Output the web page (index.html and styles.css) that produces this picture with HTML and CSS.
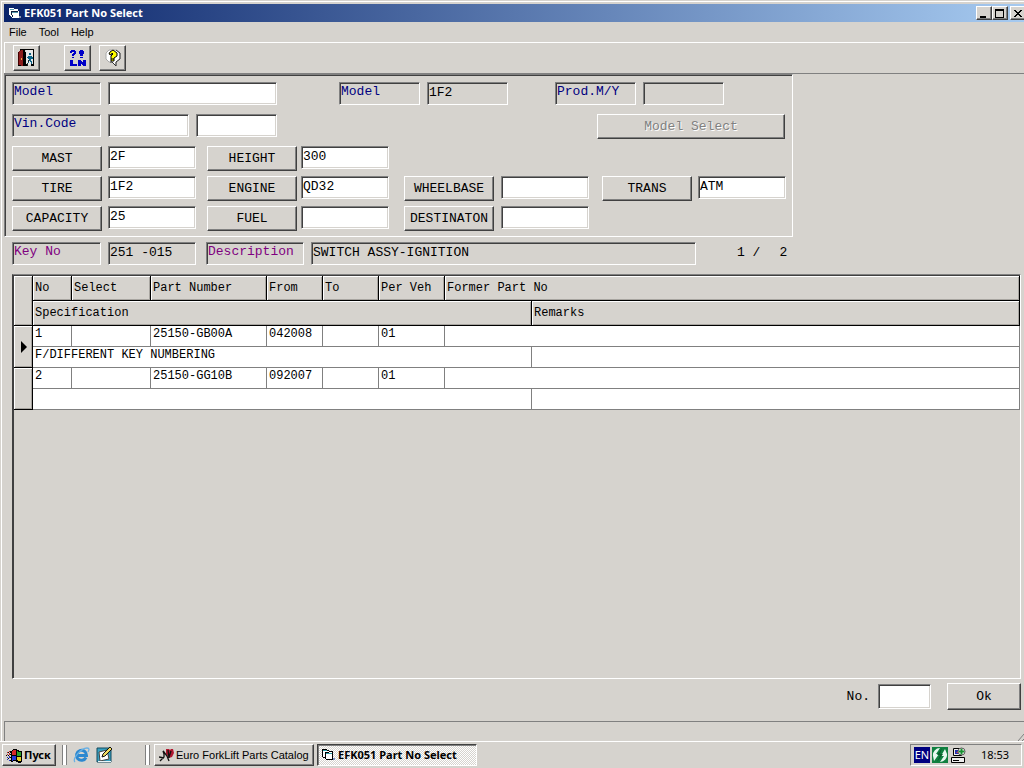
FILE: index.html
```html
<!DOCTYPE html>
<html lang="en">
<head>
    <meta charset="UTF-8">
    <meta name="viewport" content="width=device-width, initial-scale=1.0">
    <title>EFK051 Part No Select</title>
    <link rel="stylesheet" href="styles.css">
</head>
<body>
    <main class="window">
        <header class="titlebar">
            <svg class="title-icon" width="14" height="12" viewBox="0 0 14 12" shape-rendering="crispEdges">
                <path d="M1 1h5v1h4v2h1v7H4L3 9H2L1 6z" fill="#fff"/>
                <path d="M2 2h4v1H2zM4 5h6v1H4z" fill="#5a9cb0"/>
                <path d="M3 4h7v1H3zM3 5h1v3H3zM4 8h1v2H4z" fill="#102040"/>
                <path d="M11 9h2v2h-2z" fill="#8a94b0"/>
            </svg>
            <h1>EFK051 Part No Select</h1>
            <div class="window-buttons">
                <button class="win-btn" aria-label="Minimize"><svg width="10" height="9" viewBox="0 0 10 9"><path d="M1 7h6v2H1z"/></svg></button>
                <button class="win-btn" aria-label="Maximize"><svg width="10" height="9" viewBox="0 0 10 9"><path d="M0 0h9v9H0zM1 2v6h7V2z" fill-rule="evenodd"/></svg></button>
                <button class="win-btn win-close" aria-label="Close"><svg width="10" height="9" viewBox="0 0 10 9"><path d="M1 1h2v1h1v1h2V2h1V1h2v1H8v1H7v1H6v1h1v1h1v1h1v1H7V7H6V6H4v1H3v1H1V7h1V6h1V5h1V4H3V3H2V2H1z"/></svg></button>
            </div>
        </header>

        <nav class="menu">
            <button>File</button>
            <button>Tool</button>
            <button>Help</button>
        </nav>

        <div class="toolbar">
            <button class="tool" aria-label="Exit">
                <svg width="18" height="20" viewBox="0 0 18 20" shape-rendering="crispEdges">
                    <path d="M8 2h7v15H8z" fill="#e8e8e8"/>
                    <path d="M2 1h13v1H2zM15 1h1v17h-1zM13 16h2v2h-2zM0 17h5v1H0z" fill="#000"/>
                    <path d="M1 3h1V2h3v16H3v-1H1z" fill="#8b1c1c"/>
                    <path d="M0 4h1v13H0zM2 2h1v1H2z" fill="#400"/>
                    <path d="M5 2h2v2h1v12h1v2H5z" fill="#000"/>
                    <path d="M3 10h1v2H3z" fill="#e8b040"/>
                    <path d="M11 5h2v2h-2zM10 8h4v1h1v2h-2v2h1v3h-1v-2h-1v-1h-1v2h-1v1H9v-1h1v-3h1v-1h-1v-1H9V9h1z" fill="#0a6488"/>
                    <path d="M9 15h1v3H9zM10 12h1v2h-1z" fill="#222"/>
                </svg>
            </button>
            <button class="tool tool-gap" aria-label="Line number query">
                <svg width="18" height="18" viewBox="0 0 18 18" shape-rendering="crispEdges" fill="#0000c8">
                    <path d="M2 1h4v1h1v3H6v1H5v1H3V5h1V4h1V3H3v1H1V2h1zM3 8h2v1H3z"/>
                    <path d="M11 1h3v1h1v3h-1v2h-3V5h-1V2h1zM11 8h3v1h-3z"/>
                    <path d="M1 11h3v4h4v2H1zM9 11h3v1h1v1h1v-2h3v6h-3v-1h-1v-1h-1v2H9z"/>
                </svg>
            </button>
            <button class="tool" aria-label="Help">
                <svg width="18" height="18" viewBox="0 0 18 18">
                    <path d="M5 1h7l4 3v6l-4 3v4l-4-4H5L2 10V4z" fill="#fff" stroke="#aaa"/>
                    <path d="M12 1l4 3v6l-4 3v4l-4-4H6" fill="none" stroke="#333"/>
                    <path d="M6 3l3-2 4 3v3l-3 2v3H7V7l2-2-1-1-1 2-2-1z" fill="#ff0" stroke="#000"/>
                    <path d="M7 10h3" stroke="#000"/>
                </svg>
            </button>
        </div>

        <section class="workspace">
            <form class="panel">
                <div class="row">
                    <label class="caption" for="model">Model</label>
                    <input class="field wide" id="model" type="text">
                    <label class="caption short model-second" for="model-code">Model</label>
                    <input class="field code flat" id="model-code" type="text" value="1F2" readonly>
                    <label class="caption short prod" for="prod">Prod.M/Y</label>
                    <input class="field code flat" id="prod" type="text" readonly>
                </div>
                <div class="row">
                    <label class="caption" for="vin">Vin.Code</label>
                    <input class="field code" id="vin" type="text">
                    <input class="field code" type="text" aria-label="Vin.Code number">
                    <button class="btn model-select" type="button" disabled>Model Select</button>
                </div>
                <div class="specs">
                    <button class="btn" type="button">MAST</button>
                    <input class="field" type="text" value="2F" aria-label="MAST">
                    <button class="btn" type="button">HEIGHT</button>
                    <input class="field" type="text" value="300" aria-label="HEIGHT">
                    <button class="btn first" type="button">TIRE</button>
                    <input class="field" type="text" value="1F2" aria-label="TIRE">
                    <button class="btn" type="button">ENGINE</button>
                    <input class="field" type="text" value="QD32" aria-label="ENGINE">
                    <button class="btn" type="button">WHEELBASE</button>
                    <input class="field" type="text" aria-label="WHEELBASE">
                    <button class="btn" type="button">TRANS</button>
                    <input class="field" type="text" value="ATM" aria-label="TRANS">
                    <button class="btn first" type="button">CAPACITY</button>
                    <input class="field" type="text" value="25" aria-label="CAPACITY">
                    <button class="btn" type="button">FUEL</button>
                    <input class="field" type="text" aria-label="FUEL">
                    <button class="btn" type="button">DESTINATON</button>
                    <input class="field" type="text" aria-label="DESTINATON">
                </div>
            </form>

            <div class="key-row">
                <label class="caption purple" for="key-no">Key No</label>
                <input class="field flat" id="key-no" type="text" value="251 -015" readonly>
                <label class="caption purple desc-label" for="desc">Description</label>
                <input class="field flat desc" id="desc" type="text" value="SWITCH ASSY-IGNITION" readonly>
                <span class="page-no">1 /</span>
                <span class="page-total">2</span>
            </div>

            <div class="grid">
                <table>
                    <colgroup>
                        <col class="c-mark"><col class="c-no"><col class="c-select"><col class="c-part">
                        <col class="c-date"><col class="c-date"><col class="c-veh"><col class="c-former"><col>
                    </colgroup>
                    <thead>
                        <tr>
                            <th class="mark" rowspan="2"></th>
                            <th>No</th>
                            <th>Select</th>
                            <th>Part Number</th>
                            <th>From</th>
                            <th>To</th>
                            <th>Per Veh</th>
                            <th colspan="2">Former Part No</th>
                        </tr>
                        <tr>
                            <th colspan="7">Specification</th>
                            <th>Remarks</th>
                        </tr>
                    </thead>
                    <tbody>
                        <tr>
                            <th class="mark" rowspan="2"><svg width="6" height="12" viewBox="0 0 6 12"><path d="M0 0l6 6-6 6z"/></svg></th>
                            <td>1</td>
                            <td></td>
                            <td>25150-GB00A</td>
                            <td>042008</td>
                            <td></td>
                            <td>01</td>
                            <td colspan="2"></td>
                        </tr>
                        <tr>
                            <td colspan="7">F/DIFFERENT KEY NUMBERING</td>
                            <td></td>
                        </tr>
                        <tr>
                            <th class="mark" rowspan="2"></th>
                            <td>2</td>
                            <td></td>
                            <td>25150-GG10B</td>
                            <td>092007</td>
                            <td></td>
                            <td>01</td>
                            <td colspan="2"></td>
                        </tr>
                        <tr>
                            <td colspan="7"></td>
                            <td></td>
                        </tr>
                    </tbody>
                </table>
            </div>

            <div class="actions">
                <label for="number">No.</label>
                <input class="field number" id="number" type="text">
                <button class="btn ok">Ok</button>
            </div>
        </section>

        <footer class="status">
            <svg width="6" height="8" viewBox="0 0 6 8"><path d="M0 8l6-7M4 8l2-2" stroke="#808080"/></svg>
        </footer>
    </main>

    <div class="taskbar">
        <button class="start">
            <svg width="17" height="15" viewBox="0 0 17 15" shape-rendering="crispEdges">
                <path d="M5 3h1V2h1V1h4v1h2v1h3v11h-1v1h-3v-1h-2v-1H7v1H5z" fill="#000"/>
                <path d="M6 3h1V2h3v5H6z" fill="#d82828"/>
                <path d="M11 3h1v1h3v4h-4z" fill="#28a028"/>
                <path d="M6 8h4v4H7v1H6z" fill="#2838d8"/>
                <path d="M11 9h4v4h-3v-1h-1z" fill="#e8d028"/>
                <path d="M3 3h1v1H3zM3 5h1v2H3zM1 4h1v1H1zM1 6h1v1H1z" fill="#c02828"/>
                <path d="M3 8h1v2H3zM3 12h1v1H3zM1 9h1v1H1zM1 11h1v1H1z" fill="#2838c0"/>
                <path d="M4 3h1v2H4zM2 4h1v1H2zM4 6h1v1H4zM2 7h1v1H2zM4 9h1v1H4zM2 10h1v1H2zM4 12h1v1H4zM0 7h1v1H0z" fill="#000"/>
            </svg>
            Пуск
        </button>
        <span class="grip"></span>
        <div class="quick">
            <button aria-label="Internet Explorer">
                <svg width="17" height="16" viewBox="0 0 17 16">
                    <path d="M13 10.500a5 5 0 1 1 .5-2H5" fill="none" stroke="#2c88d0" stroke-width="3"/>
                    <path d="M2 15C-1 12 8 1 14 1c3 0 2 2 1 4" fill="none" stroke="#68b0e4" stroke-width="1.3"/>
                </svg>
            </button>
            <button aria-label="Show desktop">
                <svg width="17" height="16" viewBox="0 0 17 16">
                    <path d="M1 1h14v14H1z" fill="#38a0c0" stroke="#12485c"/>
                    <path d="M3 5l8-2 2 9-9 2z" fill="#fff" stroke="#444"/>
                    <path d="M2 14.500h13" stroke="#e8f4f8"/>
                    <path d="M6 10l1-3 7-7 2 2-7 7z" fill="#f0dc60" stroke="#111"/>
                </svg>
            </button>
        </div>
        <span class="grip"></span>
        <div class="tasks">
            <button class="task">
                <svg width="15" height="14" viewBox="0 0 15 14">
                    <path d="M7 1h3l1 1 1-1h2l1 4-2 4-3 1-3-4z" fill="#b01830"/>
                    <path d="M1 13l4-4V4l3 4 2 5M0 9l5 1M4 3l1 3M9 2l1 8M12 3l-2 6" fill="none" stroke="#111" stroke-width="1.3"/>
                </svg>
                Euro ForkLift Parts Catalog
            </button>
            <button class="task active">
                <svg width="14" height="12" viewBox="0 0 14 12" shape-rendering="crispEdges">
                    <path d="M1 1h5v1h4v8H4V8H1z" fill="#fff"/>
                    <path d="M1 1h5v1H1zM4 4h6v1H4z" fill="#30a0a8"/>
                    <path d="M0 0h5v1H0zM0 1h1v7H0zM5 1h2v1H5zM7 2h4v1H7zM3 3h4v1H3zM3 4h1v6H3zM4 10h7v1H4zM10 3h1v7h-1zM1 8h2v1H1z" fill="#000"/>
                    <path d="M11 9h2v2h-2z" fill="#7890c0"/>
                </svg>
                EFK051 Part No Select
            </button>
        </div>
        <div class="tray">
            <span class="lang">EN</span>
            <svg width="16" height="16" viewBox="0 0 16 16">
                <path d="M0 0h16v16H0z" fill="#108040"/>
                <path d="M1 9a7 7 0 0 1 7-8L4 7h3L2 14zM15 7a7 7 0 0 1-7 8l4-6H9l4-7z" fill="#e8f8f0"/>
                <path d="M10 1L5 8h3l-3 7 6-8H8z" fill="#0a5c2c"/>
            </svg>
            <svg width="16" height="16" viewBox="0 0 16 16">
                <path d="M3.500 1.500h8v7h-8z" fill="#eee" stroke="#000"/>
                <path d="M1.500 10.500h13v5h-13z" fill="#eee" stroke="#000"/>
                <path d="M5 3h5v4H5z" fill="#2030b0"/>
                <path d="M6 6l3-3 1 3z" fill="#e05050"/>
                <path d="M3 13.500h6" stroke="#000"/>
                <circle cx="11.500" cy="4.500" r="3.500" fill="#fff" stroke="#555"/>
                <path d="M11 2h1v2h2v1h-2v2h-1V5H9V4h2z" fill="#189030" stroke="#189030"/>
            </svg>
            <time>18:53</time>
        </div>
    </div>
</body>
</html>
```
FILE: styles.css
```css
* {
    box-sizing: border-box;
}
body {
    margin: 0;
    height: 100vh;
    display: flex;
    flex-direction: column;
    overflow: hidden;
    background-color: #d6d3ce;
    color: #000;
    font-family: "Noto Sans", sans-serif;
    font-size: 11px;
    line-height: 14px;
}
button, input {
    font: inherit;
    color: inherit;
    border-radius: 0;
    margin: 0;
}
button {
    background-color: #d6d3ce;
    padding: 0;
}
svg {
    display: block;
    flex: none;
}

/* window frame */
.window {
    flex: 1;
    min-height: 0;
    display: flex;
    flex-direction: column;
    margin: 1px 0 0 1px;
    border-top: 1px solid #fff;
    border-left: 1px solid #fff;
    padding: 2px 0 0 2px;
}
.titlebar {
    display: flex;
    align-items: center;
    height: 18px;
    padding-left: 4px;
    background: linear-gradient(to right, #0a246a, #a6caf0);
    color: #fff;
}
.titlebar h1 {
    margin: 0 auto 0 2px;
    font-size: 11px;
    font-weight: bold;
}
.window-buttons {
    display: flex;
}
.win-btn {
    display: flex;
    align-items: center;
    justify-content: center;
    width: 16px;
    height: 14px;
    border: 1px solid;
    border-color: #fff #404040 #404040 #fff;
    box-shadow: inset -1px -1px #808080;
}
.win-close {
    margin-left: 2px;
    width: 14px;
    border-right: 0;
    box-shadow: inset 0 -1px #808080;
}
.menu {
    display: flex;
    gap: 12px;
    height: 20px;
    padding: 0 5px;
    font-family: "Liberation Sans", Arial, sans-serif;
}
.menu button {
    border: 0;
}
.toolbar {
    display: flex;
    gap: 8px;
    height: 31px;
    padding: 2px 8px;
    border-top: 1px solid #fff;
    border-left: 1px solid #fff;
}
.tool {
    display: flex;
    align-items: center;
    justify-content: center;
    width: 27px;
    height: 26px;
    border: 1px solid;
    border-color: #fff #404040 #404040 #fff;
    box-shadow: inset -1px -1px #808080;
}
.tool-gap {
    margin-left: 16px;
}

/* form */
.workspace {
    flex: 1;
    min-height: 0;
    display: flex;
    flex-direction: column;
    border-top: 1px solid #808080;
    font-family: "Liberation Mono", monospace;
    font-size: 13px;
}
.panel {
    width: fit-content;
    display: flex;
    flex-direction: column;
    gap: 9px;
    padding: 7px 6px 0 7px;
    border: 1px solid;
    border-color: #808080 #fff #fff #808080;
    box-shadow: inset 1px 1px #404040;
}
.row, .key-row {
    display: flex;
    gap: 7px;
}
.caption {
    width: 89px;
    height: 23px;
    padding: 2px 1px;
    border: 1px solid;
    border-color: #808080 #fff #fff #808080;
    box-shadow: inset 1px 1px #404040;
    color: #000080;
}
.short {
    width: 81px;
}
.purple {
    color: #800080;
}
.model-second {
    margin-left: 55px;
}
.prod {
    margin-left: 40px;
}
.field {
    width: 88px;
    height: 23px;
    padding: 0 1px 3px;
    border: 1px solid;
    border-color: #808080 #fff #fff #808080;
    box-shadow: inset 1px 1px #404040, inset -1px -1px #d6d3ce;
    background-color: #fff;
}
.flat {
    background-color: #d6d3ce;
}
.wide {
    width: 169px;
}
.code {
    width: 81px;
}
.btn {
    width: 90px;
    height: 25px;
    padding: 0;
    border: 1px solid;
    border-color: #fff #404040 #404040 #fff;
    box-shadow: inset -1px -1px #808080;
    white-space: nowrap;
}
.btn:disabled {
    color: #808080;
    text-shadow: 1px 1px #fff;
}
.model-select {
    width: 188px;
    margin: 0 1px 0 auto;
}
.row + .row {
    height: 23px;
}
.specs {
    display: grid;
    grid-template-columns: 96px 99px 94px 103px 97px 101px 96px 88px;
    grid-auto-rows: 30px;
}
.first {
    grid-column: 1;
}

.key-row {
    padding: 5px 8px 9px;
}
.desc-label {
    width: 98px;
    margin-left: 3px;
}
.desc {
    width: 385px;
}
.page-no {
    margin: 4px 0 0 34px;
}
.page-total {
    margin: 4px 0 0 12px;
}

/* part list */
.grid {
    flex: 1;
    min-height: 0;
    margin: 0 3px 0 8px;
    border: 1px solid;
    border-color: #808080 #fff #fff #404040;
    padding: 1px 0 0 1px;
    box-shadow: inset 1px 1px #404040;
    font-size: 12px;
}
table {
    width: 100%;
    table-layout: fixed;
    border-collapse: separate;
    border-spacing: 0;
}
.c-mark { width: 19px; }
.c-no { width: 39px; }
.c-select { width: 79px; }
.c-part { width: 116px; }
.c-date { width: 56px; }
.c-veh { width: 66px; }
.c-former { width: 87px; }
th, td {
    padding: 0 2px;
    text-align: left;
    font-weight: normal;
    white-space: nowrap;
}
th {
    height: 25px;
    background-color: #d6d3ce;
    border-right: 1px solid #000;
    border-bottom: 1px solid #000;
    box-shadow: inset 1px 1px #fff, inset -1px -1px #a8a5a0;
}
td {
    height: 21px;
    padding-bottom: 4px;
    background-color: #fff;
    border-right: 1px solid #808080;
    border-bottom: 1px solid #808080;
}
.mark {
    padding-left: 7px;
}

.actions {
    display: flex;
    align-items: center;
    justify-content: flex-end;
    gap: 8px;
    padding: 4px 3px 11px;
}
.number {
    width: 53px;
    height: 25px;
}
.ok {
    width: 74px;
    height: 27px;
    margin-left: 8px;
}
.status {
    display: flex;
    align-items: flex-end;
    justify-content: flex-end;
    height: 20px;
    border-top: 1px solid #808080;
    border-left: 1px solid #808080;
}

/* taskbar */
.taskbar {
    display: flex;
    align-items: center;
    height: 27px;
    padding: 0 2px;
    border-top: 1px solid #fff;
}
.start, .task {
    display: flex;
    align-items: center;
    height: 22px;
    border: 1px solid;
    border-color: #fff #404040 #404040 #fff;
    box-shadow: inset -1px -1px #808080;
    white-space: nowrap;
}
.start {
    width: 54px;
    padding-left: 3px;
    gap: 1px;
    font-weight: bold;
}
.grip {
    width: 5px;
    height: 20px;
    margin-left: 6px;
    border-left: 1px solid #808080;
    border-right: 1px solid #808080;
    box-shadow: inset 1px 0 #fff, inset -2px 0 #fff;
}
.quick {
    display: flex;
    gap: 6px;
    width: 72px;
    padding-left: 6px;
}
.quick button {
    border: 0;
}
.tasks {
    display: flex;
    gap: 3px;
    margin: 0 auto 0 4px;
}
.task {
    width: 160px;
    padding: 0 4px;
    gap: 2px;
    font-family: "Liberation Sans", Arial, sans-serif;
}
.active {
    border-color: #404040 #fff #fff #404040;
    box-shadow: inset 1px 1px #808080;
    background: repeating-conic-gradient(#fff 0 25%, #d6d3ce 0 50%) 0 0 / 2px 2px;
    font-family: "Noto Sans", sans-serif;
    font-weight: bold;
}
.tray {
    display: flex;
    align-items: center;
    gap: 2px;
    height: 22px;
    padding: 0 12px 0 3px;
    border: 1px solid;
    border-color: #808080 #fff #fff #808080;
}
.lang {
    width: 16px;
    height: 16px;
    background-color: #000080;
    color: #fff;
    line-height: 16px;
    text-align: center;
}
.tray time {
    margin-left: 13px;
}
```
